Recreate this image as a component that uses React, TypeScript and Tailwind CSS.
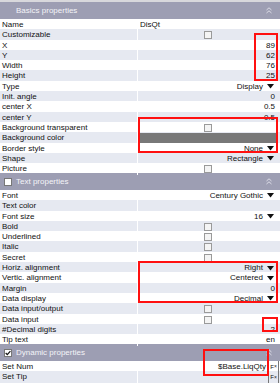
import React from "react";

type Val =
  | { k: "text"; v: string }
  | { k: "num"; v: string }
  | { k: "check" }
  | { k: "drop"; v: string }
  | { k: "color" }
  | { k: "fx"; v: string }
  | { k: "none" };

const basics: [string, Val][] = [
  ["Name", { k: "text", v: "DisQt" }],
  ["Customizable", { k: "check" }],
  ["X", { k: "num", v: "89" }],
  ["Y", { k: "num", v: "62" }],
  ["Width", { k: "num", v: "76" }],
  ["Height", { k: "num", v: "25" }],
  ["Type", { k: "drop", v: "Display" }],
  ["Init. angle", { k: "num", v: "0" }],
  ["center X", { k: "num", v: "0.5" }],
  ["center Y", { k: "num", v: "0.5" }],
  ["Background transparent", { k: "check" }],
  ["Background color", { k: "color" }],
  ["Border style", { k: "drop", v: "None" }],
  ["Shape", { k: "drop", v: "Rectangle" }],
  ["Picture", { k: "check" }],
];

const textProps: [string, Val][] = [
  ["Font", { k: "drop", v: "Century Gothic" }],
  ["Text color", { k: "none" }],
  ["Font size", { k: "drop", v: "16" }],
  ["Bold", { k: "check" }],
  ["Underlined", { k: "check" }],
  ["Italic", { k: "check" }],
  ["Secret", { k: "check" }],
  ["Horiz. alignment", { k: "drop", v: "Right" }],
  ["Vertic. alignment", { k: "drop", v: "Centered" }],
  ["Margin", { k: "num", v: "0" }],
  ["Data display", { k: "drop", v: "Decimal" }],
  ["Data input/output", { k: "check" }],
  ["Data input", { k: "check" }],
  ["#Decimal digits", { k: "num", v: "2" }],
  ["Tip text", { k: "num", v: "en" }],
];

const dyn: [string, Val][] = [
  ["Set Num", { k: "fx", v: "$Base.LiqQty" }],
  ["Set Tip", { k: "fx", v: "" }],
];

function Check() {
  return <div className="w-[8px] h-[8px] border border-[#9a9a9a] bg-[#f4f4f4]" />;
}

function Arrow() {
  return (
    <svg width="7" height="5" viewBox="0 0 7 5" className="ml-[4px]">
      <path d="M0 0 H7 L3.5 4.5 Z" fill="#111" />
    </svg>
  );
}

function Value({ v }: { v: Val }) {
  switch (v.k) {
    case "text":
      return <div className="pl-[2px] flex items-center h-full">{v.v}</div>;
    case "num":
      return <div className="pr-[5px] flex items-center justify-end h-full">{v.v}</div>;
    case "check":
      return (
        <div className="flex items-center h-full pl-[66px]">
          <Check />
        </div>
      );
    case "drop":
      return (
        <div className="pr-[6px] flex items-center justify-end h-full">
          {v.v}
          <Arrow />
        </div>
      );
    case "color":
      return (
        <div className="h-full py-[1px] pr-[2px] pl-[1px]">
          <div className="h-full bg-[#787878]" />
        </div>
      );
    case "fx":
      return (
        <div className="flex items-center justify-end h-full">
          <span className="pr-[2px]">{v.v}</span>
          <div className="h-full w-[11px] shrink-0 border-x border-[#777] flex items-center justify-center text-[6px] leading-none mr-[1px]">
            F<span className="text-[5px]">×</span>
          </div>
        </div>
      );
    default:
      return null;
  }
}

function Rows({ rows }: { rows: [string, Val][] }) {
  return (
    <>
      {rows.map(([label, v], i) => (
        <div
          key={label}
          className={`grid grid-cols-[138px_1fr] h-[10.3px] ${
            i % 2 === 0 ? "bg-white" : "bg-[#e6e9f1]"
          }`}
        >
          <div className="pl-[2px] flex items-center border-r border-[#ffffff] whitespace-nowrap">
            {label}
          </div>
          <Value v={v} />
        </div>
      ))}
    </>
  );
}

function Header({ title, box, h }: { title: string; box?: "empty" | "checked"; h: string }) {
  return (
    <div className={`${h} bg-[#9d9eb3] flex items-center text-[#f4f4f8] text-[8px]`}>
      <div className="w-[15px] flex items-center justify-center">
        {box === "empty" && <div className="w-[8px] h-[8px] bg-white border border-[#777]" />}
        {box === "checked" && (
          <div className="w-[8px] h-[8px] bg-white border border-[#777] flex items-center justify-center">
            <svg width="7" height="6" viewBox="0 0 7 6">
              <path d="M0.8 3 L2.7 5 L6.3 0.8" stroke="#111" strokeWidth="1.4" fill="none" />
            </svg>
          </div>
        )}
      </div>
      <span className="ml-[1px]">{title}</span>
      <div className="ml-auto mr-[8px] flex items-center">
        <svg width="6" height="7" viewBox="0 0 6 7">
          <path d="M0.5 3 L3 0.8 L5.5 3 M0.5 6 L3 3.8 L5.5 6" stroke="#dcdce6" strokeWidth="1" fill="none" />
        </svg>
      </div>
    </div>
  );
}

function RedBox({ x, y, w, h }: { x: number; y: number; w: number; h: number }) {
  return (
    <div
      className="absolute border-2 border-[#ff1010] pointer-events-none"
      style={{ left: x, top: y, width: w, height: h }}
    />
  );
}

export default function App() {
  return (
    <div
      className="relative w-[280px] h-[383px] overflow-hidden bg-[#e6e9f1] text-[8px] text-[#111]"
      style={{ fontFamily: '"Liberation Sans", Arial, sans-serif' }}
    >
      <div className="h-[2px] bg-[#d8d8dc]" />
      <Header title="Basics properties" h="h-[17px]" />
      <Rows rows={basics} />
      <Header title="Text properties" box="empty" h="h-[16.5px]" />
      <Rows rows={textProps} />
      <Header title="Dynamic properties" box="checked" h="h-[16.5px]" />
      <Rows rows={dyn} />
      <RedBox x={254} y={33} w={24} h={48} />
      <RedBox x={138} y={117} w={140} h={36} />
      <RedBox x={138} y={261} w={140} h={42} />
      <RedBox x={262} y={317} w={16} h={15} />
      <RedBox x={203} y={349} w={66} h={27} />
    </div>
  );
}
